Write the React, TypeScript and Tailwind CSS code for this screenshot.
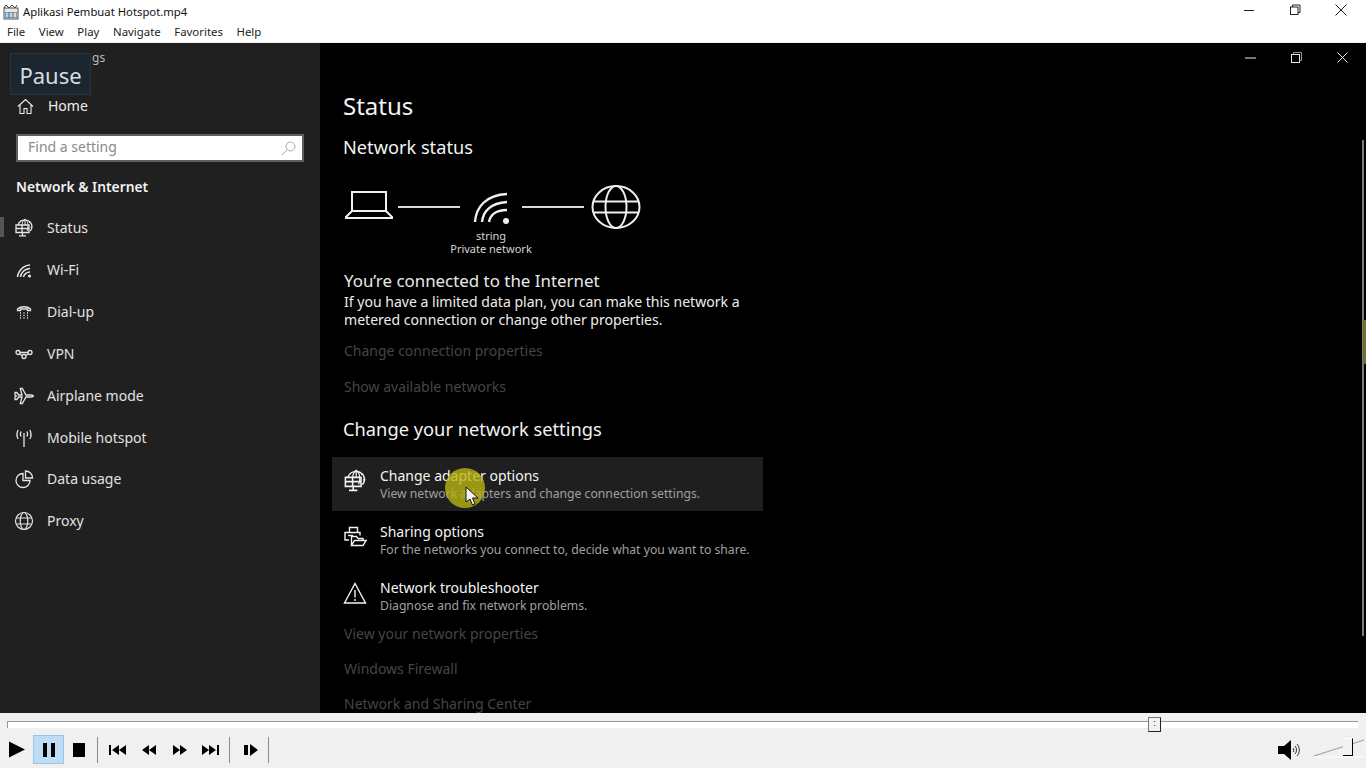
import React from "react";

const font = { fontFamily: '"Noto Sans", sans-serif' };

const Ic = ({ s = 20, vb = 20, children }: { s?: number; vb?: number; children: React.ReactNode }) => (
  <svg width={s} height={s} viewBox={`0 0 ${vb} ${vb}`} fill="none" stroke="currentColor" strokeWidth={1.3}>
    {children}
  </svg>
);

const StatusIcon = ({ s = 20 }: { s?: number }) => (
  <Ic s={s}>
    <path d="M4 7a7.200 7.200 0 0 1 14 1.500c0 1.800-.7 3.300-1.800 4.500" />
    <path d="M8 7c.3-3 1.500-5 3-6 1.500 1 2.800 3 3 6.500 0 2-.3 4-1 5.500M11 1v6M15 4.500h2M16.500 9H18" strokeWidth={1} />
    <path d="M2 7h13v7.500H2zM2 10.500h13M8 7v7.500" />
    <path d="M8.500 14.500v3M5 17.800h7" />
  </Ic>
);
const WifiIcon = () => (
  <Ic>
    <path d="M3.500 17C4 11 9 5.500 16 5M6.500 17c.4-4 4-8.400 9.500-8.500M9.500 17c.3-2.400 3-5 6.500-5" strokeWidth={1.500} />
    <circle cx="15.500" cy="16" r="1.600" fill="currentColor" stroke="none" />
  </Ic>
);
const DialIcon = () => (
  <Ic>
    <path d="M3.500 8.500V7c3-3 10-3 13 0v1.500h-3V7h-7v1.500z" />
    <path d="M6 11h1M9.500 11h1M13 11h1M6 13.500h1M9.500 13.500h1M13 13.500h1M6 16h1M9.500 16h1M13 16h1" />
  </Ic>
);
const VpnIcon = () => (
  <Ic>
    <circle cx="4" cy="8.500" r="2" />
    <circle cx="16" cy="8.500" r="2" />
    <circle cx="10" cy="12.500" r="2" />
    <path d="M6 8.500h8M5.500 10l3 1.500M14.500 10l-3 1.500" />
  </Ic>
);
const PlaneIcon = () => (
  <Ic>
    <path d="M1 6.500h1.800l2 2.500h3.200L6.300 2.500h2L12 9h4.500c2 0 2.800.7 2.800 1s-.8 1-2.800 1H12l-3.700 6.500h-2L8 11H4.800l-2 2.500H1V10.800L2.500 10 1 9.200z" />
  </Ic>
);
const HotspotIcon = () => (
  <Ic>
    <path d="M10 7v12" />
    <circle cx="10" cy="6" r=".9" fill="currentColor" stroke="none" />
    <path d="M7.200 3.500c-1 1.500-1 3.500 0 5M12.800 3.500c1 1.500 1 3.500 0 5M4.200 2c-1.700 3-1.700 6 0 9M15.800 2c1.700 3 1.700 6 0 9" />
  </Ic>
);
const DataIcon = () => (
  <Ic>
    <path d="M9 4.500a7 7 0 1 0 7 7H9z" />
    <path d="M11.500 2v7h7a7 7 0 0 0-7-7z" />
  </Ic>
);
const GlobeIcon = ({ s = 20, w = 1.200 }: { s?: number; w?: number }) => (
  <svg width={s} height={s} viewBox="0 0 20 20" fill="none" stroke="currentColor" strokeWidth={w}>
    <circle cx="10" cy="10" r="8.500" />
    <ellipse cx="10" cy="10" rx="3.800" ry="8.500" />
    <path d="M2.300 7h15.400M2.300 13h15.400" />
  </svg>
);
const ShareIcon = () => (
  <svg width="24" height="24" viewBox="0 0 24 24" fill="none" stroke="currentColor" strokeWidth={1.400}>
    <path d="M6.500 7V2.500h8V7M6 15H2V7.500h15v3" />
    <path d="M5 10.500h5" />
    <path d="M8.500 20.500v-9h5l1.500 2h5v2M8.500 20.500h11.500l3-5H11.500z" />
  </svg>
);
const WarnIcon = () => (
  <svg width="24" height="24" viewBox="0 0 24 24" fill="none" stroke="currentColor" strokeWidth={1.400}>
    <path d="M12 2.500L1.500 22h21z" />
    <path d="M12 9v7.500M12 18v2" />
  </svg>
);

const nav: [string, React.ReactNode, boolean?][] = [
  ["Status", <StatusIcon />, true],
  ["Wi-Fi", <WifiIcon />],
  ["Dial-up", <DialIcon />],
  ["VPN", <VpnIcon />],
  ["Airplane mode", <PlaneIcon />],
  ["Mobile hotspot", <HotspotIcon />],
  ["Data usage", <DataIcon />],
  ["Proxy", <GlobeIcon />],
];

const Faint = ({ children, cls }: { children: React.ReactNode; cls: string }) => (
  <div className={`text-[14px] leading-[20px] text-[#454545] ml-[24px] ${cls}`}>{children}</div>
);

const Opt = ({ icon, t, d, hover, cls = "" }: { icon: React.ReactNode; t: string; d: string; hover?: boolean; cls?: string }) => (
  <div className={`w-[431px] h-[54px] ml-[12px] flex ${hover ? "bg-[#1f1f1f]" : ""} ${cls}`}>
    <div className="w-[48px] pl-[11px] pt-[12px] text-[#f2f2f2]">{icon}</div>
    <div className="pt-[9px]">
      <div className="text-[14px] leading-[20px] text-[#f5f5f5]">{t}</div>
      <div className="text-[12.200px] leading-[15px] text-[#a0a0a0] whitespace-nowrap">{d}</div>
    </div>
  </div>
);

const Btn = ({ children, cls = "" }: { children: React.ReactNode; cls?: string }) => (
  <div className={`h-[29px] flex items-center justify-center ${cls}`}>{children}</div>
);

const Sep = ({ cls = "" }: { cls?: string }) => <div className={`w-px h-[26px] bg-[#8a8a8a] ${cls}`} />;

export default function App() {
  return (
    <div className="w-[1366px] h-[768px] overflow-hidden flex flex-col relative bg-[#f0f0f0]" style={font}>
      {/* Title bar */}
      <div className="h-[22px] bg-white flex items-center text-[#111] shrink-0">
        <svg width="16" height="16" viewBox="0 0 16 16" className="ml-[3px] mt-[1px]">
          <rect x="1" y="4" width="14" height="11" fill="#e8e8e8" stroke="#555" />
          <path d="M1 4L3 1l3 3 3-3 3 3 2-3" stroke="#444" fill="none" />
          <rect x="2" y="8" width="12" height="6" fill="#3a6fa8" />
          <rect x="2.500" y="8.500" width="3" height="5" fill="#b0d0e8" />
          <rect x="6.500" y="8.500" width="3" height="5" fill="#c8d8c0" />
          <rect x="10.500" y="8.500" width="3" height="5" fill="#e8d8c0" />
        </svg>
        <div className="ml-[4px] mt-[2px] text-[11.300px] leading-[18px] whitespace-nowrap">Aplikasi Pembuat Hotspot.mp4</div>
        <div className="ml-auto flex items-center mt-[-2px] text-[#222]">
          <svg width="12" height="12" viewBox="0 0 12 12" stroke="currentColor" className="mr-[34px]"><path d="M1 6.500h10" /></svg>
          <svg width="12" height="12" viewBox="0 0 12 12" fill="none" stroke="currentColor" className="mr-[34px]"><rect x="1.500" y="3" width="7.500" height="7.500" /><path d="M3.500 3V1h7.500v7.500H9" /></svg>
          <svg width="12" height="12" viewBox="0 0 12 12" stroke="currentColor" className="mr-[19px]"><path d="M.5.500l11 11M11.500.500l-11 11" /></svg>
        </div>
      </div>
      {/* Menu */}
      <div className="h-[21px] bg-white flex items-center pl-[7px] gap-[13.600px] text-[11.400px] text-[#222] shrink-0 border-b border-[#f0f0f0]">
        {["File", "View", "Play", "Navigate", "Favorites", "Help"].map((m) => (
          <span key={m}>{m}</span>
        ))}
      </div>
      {/* Video: settings window */}
      <div className="h-[670px] shrink-0 flex bg-black overflow-hidden relative">
        <div className="w-[320px] bg-[#202020] text-[#eaeaea] shrink-0">
          <div className="pl-[92px] pt-[7px] text-[12px] leading-[16px] text-[#bbb] h-[23px] overflow-hidden">gs</div>
          <div className="mt-[29px] h-[22px] flex items-center pl-[17px] text-[#eee]">
            <svg width="17" height="17" viewBox="0 0 17 17" fill="none" stroke="currentColor" strokeWidth="1.100">
              <path d="M1 8.500L8.500 1.500 16 8.500M3 7v8.500h4v-5h3v5h4V7" />
            </svg>
            <span className="ml-[14px] text-[14px] leading-[20px]">Home</span>
          </div>
          <div className="mx-[16px] mt-[17px] h-[28px] border-2 border-[#5f5f5f] bg-white flex items-center pl-[10px] pr-[5px] text-[14px] leading-[20px] text-[#8a8a8a]">
            <span className="mt-[-3px]">Find a setting</span>
            <svg width="17" height="17" viewBox="0 0 17 17" fill="none" stroke="#aaa" strokeWidth="1" className="ml-auto">
              <circle cx="10.500" cy="6.500" r="4.500" />
              <path d="M7 10l-5 5" />
            </svg>
          </div>
          <div className="pl-[16px] mt-[15px] text-[13.800px] leading-[20px] font-semibold text-[#f2f2f2]">Network &amp; Internet</div>
          <div className="mt-[10.400px]">
            {nav.map(([t, icon, sel]) => (
              <div key={t} className="h-[41.860px] flex items-center relative">
                {sel && <div className="absolute left-0 top-[10px] w-[4px] h-[20px] bg-[#555]" />}
                <div className="w-[47px] pl-[14px] flex items-center text-[#e6e6e6]">{icon}</div>
                <span className="text-[14px] leading-[20px] text-[#e2e2e2]">{t}</span>
              </div>
            ))}
          </div>
        </div>

        <div className="flex-1 bg-black text-[#f2f2f2] relative">
          <div className="ml-[23px] mt-[45px] text-[24px] leading-[36px]">Status</div>
          <div className="ml-[23px] mt-[11px] text-[18.200px] leading-[24px] font-normal">Network status</div>
          {/* Diagram */}
          <div className="ml-[24px] mt-[26px] flex items-start h-[72px]">
            <svg width="50" height="30" viewBox="0 0 50 30" fill="none" stroke="#f0f0f0" strokeWidth="2" className="mt-[5px]">
              <path d="M8 2h34v19H8zM8 21L2 27v1h46v-1l-6-6" />
            </svg>
            <div className="w-[62px] h-[2px] bg-[#d8d8d8] ml-[4px] mt-[21px]" />
            <div className="w-[62px] flex flex-col items-center shrink-0">
              <svg width="38" height="32" viewBox="0 0 38 32" fill="none" stroke="#f0f0f0" strokeWidth="2.400" className="mt-[7px]">
                <path d="M3 30C4 15 14 3 35 2M10 30c1-10 8-19 25-20M17 30c1-6 6-12 18-12" />
                <circle cx="34" cy="29" r="3" fill="#f0f0f0" stroke="none" />
              </svg>
              <div className="w-[120px] mt-[5px] text-center text-[11px] leading-[13px] text-[#d5d5d5]">
                string
                <br />
                Private network
              </div>
            </div>
            <div className="w-[62px] h-[2px] bg-[#d8d8d8] mt-[21px]" />
            <svg width="50" height="44" viewBox="0 0 50 44" fill="none" stroke="#f0f0f0" strokeWidth="2" className="ml-[7px]">
              <ellipse cx="25" cy="22" rx="23.500" ry="21" />
              <ellipse cx="25" cy="22" rx="10.500" ry="21" />
              <path d="M3 16.500h44M3 27.500h44" />
            </svg>
          </div>
          <div className="ml-[24px] mt-[13px] text-[16.900px] leading-[22px] text-[#e8e8e8] whitespace-nowrap">You’re connected to the Internet</div>
          <div className="ml-[24px] mt-[1px] w-[420px] text-[14.050px] leading-[18px] text-[#ededed]">
            If you have a limited data plan, you can make this network a metered connection or change other properties.
          </div>
          <Faint cls="mt-[12px]">Change connection properties</Faint>
          <Faint cls="mt-[16px]">Show available networks</Faint>
          <div className="ml-[23px] mt-[19px] text-[18.300px] leading-[26px] font-normal">Change your network settings</div>
          <div className="mt-[15px]" />
          <Opt hover icon={<StatusIcon s={24} />} t="Change adapter options" d="View network adapters and change connection settings." />
          <Opt cls="mt-[2px]" icon={<ShareIcon />} t="Sharing options" d="For the networks you connect to, decide what you want to share." />
          <Opt cls="mt-[2px]" icon={<WarnIcon />} t="Network troubleshooter" d="Diagnose and fix network problems." />
          <Faint cls="mt-[1px]">View your network properties</Faint>
          <Faint cls="mt-[15px]">Windows Firewall</Faint>
          <Faint cls="mt-[15px]">Network and Sharing Center</Faint>

          {/* window controls */}
          <div className="absolute top-0 right-0 h-[28px] flex items-center text-[#e8e8e8]">
            <svg width="11" height="11" viewBox="0 0 11 11" stroke="currentColor" className="mr-[35px]"><path d="M0 6h11" /></svg>
            <svg width="11" height="11" viewBox="0 0 11 11" fill="none" stroke="currentColor" className="mr-[35px]"><rect x=".5" y="2.500" width="8" height="8" /><path d="M2.500 2.500V.5h8v8H8.500" stroke="#999" /></svg>
            <svg width="11" height="11" viewBox="0 0 11 11" stroke="currentColor" className="mr-[18px]"><path d="M.5.500l10 10M10.500.500l-10 10" /></svg>
          </div>
          {/* scrollbar */}
          <div className="absolute right-[2px] top-[97px] w-[2px] h-[496px] bg-[#7a7a7a]" />
          <div className="absolute right-0 top-[277px] w-[3px] h-[44px] bg-[#6f7030]" />
          {/* cursor */}
          <div className="absolute left-[125px] top-[425px] w-[40px] h-[40px] rounded-full bg-[#b8b414]/80" />
          <svg width="14" height="20" viewBox="0 0 14 20" className="absolute left-[145px] top-[443px]">
            <path d="M1 1v15l4-3 2.500 6 2.500-1-2.500-6H13z" fill="#f4f4f4" stroke="#111" strokeWidth="1" />
          </svg>
        </div>

        {/* Pause tooltip */}
        <div className="absolute left-[10px] top-[10px] w-[81px] h-[42px] pt-[2px] bg-[#1c2630] border border-[#2a3440] flex items-center justify-center text-[22px] text-[#d8dde0]">
          Pause
        </div>
      </div>
      {/* Player */}
      <div className="flex-1 bg-[#f0f0f0] flex flex-col relative">
        <div className="mt-[8px] ml-[7px] mr-[8px] h-[7px] bg-white border-t border-t-[#999] border-l border-l-[#999] relative">
          <div className="absolute left-[1140px] top-[-5px] w-[13px] h-[15px] bg-[#f2f2f2] border border-[#777] border-r-[#222] border-b-[#222] text-[8px] leading-[10px] text-center">:</div>
        </div>
        <div className="mt-[6px] h-[31px] flex items-center text-black pl-[9px]">
          <Btn cls="w-[16px] mr-[8px]">
            <svg width="17" height="17" viewBox="0 0 17 17"><path d="M0 0l17 8.500L0 17z" fill="#000" /></svg>
          </Btn>
          <Btn cls="w-[31px] bg-[#bfdcf5] border border-[#9cc4e8]">
            <svg width="12" height="14" viewBox="0 0 12 14"><path d="M0 0h4v14H0zM8 0h4v14H8z" fill="#000" /></svg>
          </Btn>
          <Btn cls="w-[30px]">
            <svg width="12" height="14" viewBox="0 0 12 14"><rect width="12" height="14" fill="#000" /></svg>
          </Btn>
          <Sep cls="ml-[3px] mr-[10px]" />
          <Btn cls="w-[20px] mr-[11px]">
            <svg width="18" height="12" viewBox="0 0 18 12"><path d="M0 1h2v10H0zM3 6l7-5v10zM10 6l7-5v10z" fill="#000" /></svg>
          </Btn>
          <Btn cls="w-[20px] mr-[11px]">
            <svg width="14" height="12" viewBox="0 0 14 12"><path d="M0 6l7-5v10zM7 6l7-5v10z" fill="#000" /></svg>
          </Btn>
          <Btn cls="w-[20px] mr-[11px]">
            <svg width="14" height="12" viewBox="0 0 14 12"><path d="M0 1l7 5-7 5zM7 1l7 5-7 5z" fill="#000" /></svg>
          </Btn>
          <Btn cls="w-[20px]">
            <svg width="18" height="12" viewBox="0 0 18 12"><path d="M0 1l7 5-7 5zM7 1l7 5-7 5zM15 1h2v10h-2z" fill="#000" /></svg>
          </Btn>
          <Sep cls="ml-[8px] mr-[13px]" />
          <Btn cls="w-[16px]">
            <svg width="14" height="12" viewBox="0 0 14 12"><path d="M0 1h4v10H0zM6 0l8 6-8 6z" fill="#000" /></svg>
          </Btn>
          <Sep cls="ml-[9px]" />
          <div className="ml-auto mr-[2px] flex items-center">
            <svg width="24" height="22" viewBox="0 0 24 22" className="mr-[12px]">
              <path d="M0 7h6l7-6v20l-7-6H0z" fill="#000" />
              <path d="M15 9c1 1 1 3 0 4M17 7c2 2 2 6 0 8M19 5c3 3 3 9 0 12" stroke="#333" fill="none" />
            </svg>
            <div className="w-[50px] h-[26px] relative">
              <svg width="50" height="26" viewBox="0 0 50 26"><path d="M0 19L50 3" stroke="#999" /><path d="M0 20h50V4" stroke="#fff" fill="none" /></svg>
              <div className="absolute left-[29px] top-[1px] w-[10px] h-[18px] bg-[#f2f2f2] border-r border-b border-r-black border-b-black border-t border-t-white" />
            </div>
          </div>
        </div>
      </div>
    </div>
  );
}
